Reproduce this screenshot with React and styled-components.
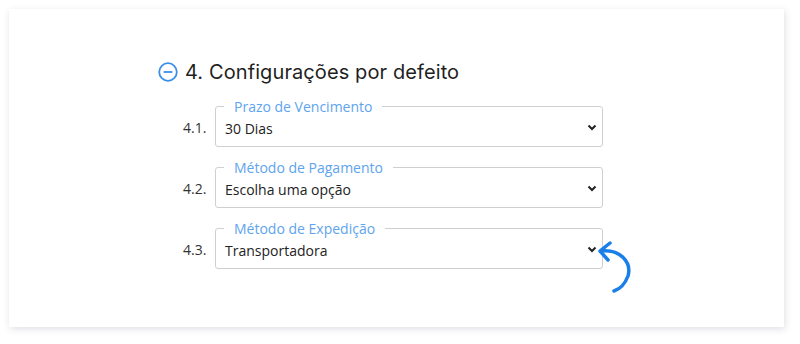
import styled, { createGlobalStyle } from "styled-components";

const GlobalStyle = createGlobalStyle`
  body {
    margin: 0;
    background: #ffffff;
    font-family: "Open Sans", "Liberation Sans", sans-serif;
  }
`;

const Page = styled.div`
  padding: 9px 16px 17px 9px;
`;

const Card = styled.div`
  position: relative;
  box-sizing: border-box;
  width: 775px;
  height: 318px;
  background: #ffffff;
  box-shadow: 1px 2px 7px rgba(40, 50, 80, 0.15);
  padding: 48px 0 0 149px;
`;

const Heading = styled.h2`
  display: flex;
  align-items: center;
  gap: 7px;
  margin: 0 0 10px;
  height: 30px;
  font-family: "Inter", "Liberation Sans", sans-serif;
  font-weight: 400;
  font-size: 20px;
  color: #1f1f1f;
  letter-spacing: 0.1px;
`;

const Rows = styled.div`
  display: flex;
  flex-direction: column;
  gap: 11px;
`;

const Row = styled.div`
  display: flex;
  align-items: flex-end;
`;

const Num = styled.span`
  width: 32px;
  padding-left: 25px;
  padding-bottom: 10px;
  font-size: 14px;
  color: #333;
`;

const Field = styled.fieldset`
  position: relative;
  box-sizing: border-box;
  width: 388px;
  margin: 0;
  padding: 0 8px 6px;
  border: 1px solid #cfcfcf;
  border-radius: 3px;
  min-width: 0;
`;

const Legend = styled.legend`
  padding: 0 10px;
  font-size: 14px;
  line-height: 19px;
  color: #5ea4ee;
`;

const Select = styled.select`
  appearance: none;
  display: block;
  width: 100%;
  height: 24px;
  margin: 0;
  padding: 0 20px 0 1px;
  border: none;
  outline: none;
  background: transparent;
  font-family: "Open Sans", "Liberation Sans", sans-serif;
  font-size: 14px;
  color: #222;
`;

const Chevron = styled.svg`
  position: absolute;
  right: 5px;
  bottom: 15px;
  pointer-events: none;
`;

const Pointer = styled.svg`
  position: absolute;
  left: 581px;
  top: 229px;
`;

const fields = [
  { n: "4.1.", label: "Prazo de Vencimento", value: "30 Dias" },
  { n: "4.2.", label: "Método de Pagamento", value: "Escolha uma opção" },
  { n: "4.3.", label: "Método de Expedição", value: "Transportadora" },
];

export default function App() {
  return (
    <Page>
      <GlobalStyle />
      <Card>
        <Heading>
          <svg width="20" height="20" viewBox="0 0 20 20">
            <circle cx="10" cy="10" r="8.8" fill="none" stroke="#3d8fe6" strokeWidth="1.8" />
            <line x1="5.6" y1="10" x2="14.4" y2="10" stroke="#3d8fe6" strokeWidth="1.8" />
          </svg>
          4. Configurações por defeito
        </Heading>
        <Rows>
          {fields.map((f) => (
            <Row key={f.n}>
              <Num>{f.n}</Num>
              <Field>
                <Legend>{f.label}</Legend>
                <Select defaultValue={f.value}>
                  <option>{f.value}</option>
                </Select>
                <Chevron width="10" height="7" viewBox="0 0 10 7">
                  <path d="M1.5 1.5 L5 5 L8.5 1.5" fill="none" stroke="#222" strokeWidth="2" />
                </Chevron>
              </Field>
            </Row>
          ))}
        </Rows>
        <Pointer width="50" height="62" viewBox="0 0 50 62">
          <path
            d="M11 13 C 30 11, 42 24, 38 38 C 35 46, 30 51, 24 53"
            fill="none"
            stroke="#1a7fe8"
            strokeWidth="3.5"
            strokeLinecap="round"
          />
          <path
            d="M20 5 L10 13 L18 22"
            fill="none"
            stroke="#1a7fe8"
            strokeWidth="3.5"
            strokeLinecap="round"
            strokeLinejoin="round"
          />
        </Pointer>
      </Card>
    </Page>
  );
}
